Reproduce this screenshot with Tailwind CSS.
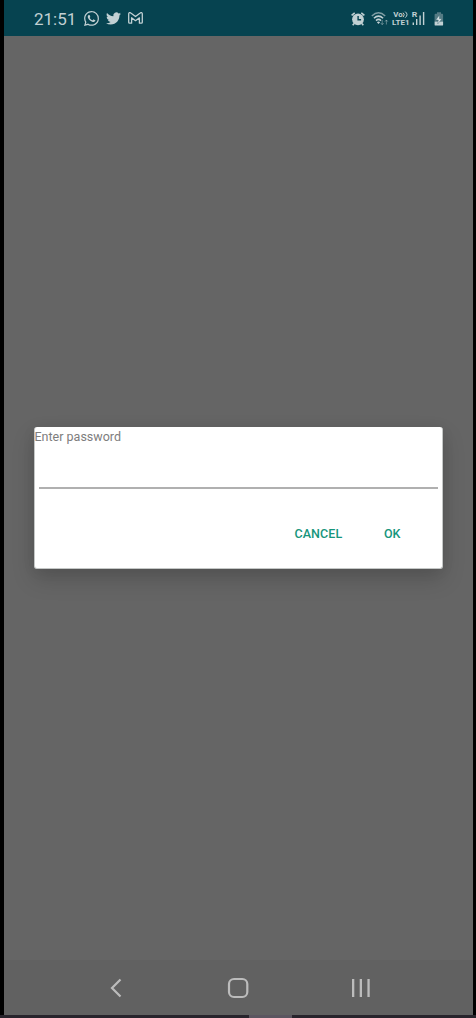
<!DOCTYPE html>
<html lang="en">
<head>
<meta charset="utf-8">
<title>Enter password</title>
<script src="https://cdn.jsdelivr.net/npm/@tailwindcss/browser@4"></script>
</head>
<body class="bg-black font-['Roboto',sans-serif] overflow-hidden">
<div class="w-[476px] h-[1018px] flex flex-col">
  <div class="ml-1 w-[469px] h-[1015px] flex flex-col bg-[#656565] overflow-hidden">
    <header class="h-9 shrink-0 bg-[#064350] flex items-center pl-[30px] pr-[29px] text-[#c1d0d3]">
      <span class="w-[42px] text-[17px] leading-5 mt-px whitespace-nowrap">21:51</span>
      <svg class="ml-2 mt-px w-[15px] h-[15px]" viewBox="0 0 24 24" fill="currentColor"><path d="M17.472 14.382c-.297-.149-1.758-.867-2.03-.967-.273-.099-.471-.148-.67.15-.197.297-.767.966-.94 1.164-.173.199-.347.223-.644.075-.297-.15-1.255-.463-2.39-1.475-.883-.788-1.48-1.761-1.653-2.059-.173-.297-.018-.458.13-.606.134-.133.298-.347.446-.52.149-.174.198-.298.298-.497.099-.198.05-.371-.025-.52-.075-.149-.669-1.612-.916-2.207-.242-.579-.487-.5-.669-.51-.173-.008-.371-.01-.57-.01-.198 0-.52.074-.792.372-.272.297-1.04 1.016-1.04 2.479 0 1.462 1.065 2.875 1.213 3.074.149.198 2.096 3.2 5.077 4.487.709.306 1.262.489 1.694.625.712.227 1.36.195 1.871.118.571-.085 1.758-.719 2.006-1.413.248-.694.248-1.289.173-1.413-.074-.124-.272-.198-.57-.347m-5.421 7.403h-.004a9.87 9.87 0 01-5.031-1.378l-.361-.214-3.741.982.998-3.648-.235-.374a9.86 9.86 0 01-1.51-5.26c.001-5.45 4.436-9.884 9.888-9.884 2.64 0 5.122 1.03 6.988 2.898a9.825 9.825 0 012.893 6.994c-.003 5.45-4.437 9.884-9.885 9.884m8.413-18.297A11.815 11.815 0 0012.05 0C5.495 0 .16 5.335.157 11.892c0 2.096.547 4.142 1.588 5.945L.057 24l6.305-1.654a11.882 11.882 0 005.683 1.448h.005c6.554 0 11.89-5.335 11.893-11.893a11.821 11.821 0 00-3.48-8.413Z"/></svg>
      <svg class="ml-[7px] w-[15px] h-[15px]" viewBox="0 0 24 24" fill="currentColor"><path d="M23.953 4.57a10 10 0 01-2.825.775 4.958 4.958 0 002.163-2.723c-.951.555-2.005.959-3.127 1.184a4.92 4.92 0 00-8.384 4.482C7.69 8.095 4.067 6.13 1.64 3.162a4.822 4.822 0 00-.666 2.475c0 1.71.87 3.213 2.188 4.096a4.904 4.904 0 01-2.228-.616v.06a4.923 4.923 0 003.946 4.827 4.996 4.996 0 01-2.212.085 4.936 4.936 0 004.604 3.417 9.867 9.867 0 01-6.102 2.105c-.39 0-.779-.023-1.17-.067a13.995 13.995 0 007.557 2.209c9.053 0 13.998-7.496 13.998-13.985 0-.21 0-.42-.015-.63A9.935 9.935 0 0024 4.59z"/></svg>
      <svg class="ml-[7px] w-[15px] h-[12px]" viewBox="0 0 15 12" fill="none" stroke="currentColor" stroke-width="1.3" stroke-linejoin="round"><path d="M.7 10.3V1.8C.7.6 2 .3 2.8 1L7.5 4.6 12.2 1c.8-.7 2.1-.4 2.1.8v8.5c0 .6-.3.9-.9.9h-2V5.8L7.5 8.7 3.6 5.8v5.4h-2c-.6 0-.9-.3-.9-.9Z"/></svg>
      <span class="grow"></span>
      <svg class="mt-px w-[14px] h-[14px]" viewBox="0 0 14 14"><circle cx="7" cy="7.3" r="5.9" fill="currentColor"/><path d="M.6 3.3 3.7.8M13.4 3.3 10.3.8M3.1 11.4 1.7 13.2M10.9 11.4l1.4 1.8" stroke="currentColor" stroke-width="1.6"/><path d="M7.1 4v3.8h3" fill="none" stroke="#064350" stroke-width="1.4"/></svg>
      <svg class="ml-[6px] mt-px w-[18px] h-[15px]" viewBox="0 0 18 15" fill="none" stroke="currentColor"><path d="M.8 4.9Q7.5-1.5 14.2 4.9" stroke-width="1.4" opacity=".65"/><path d="M2.9 7.3Q7.5 2.9 12.1 7.3M5 9.6Q7.5 7.2 10 9.6" stroke-width="1.5"/><path d="m5.9 11.2 1.6 1.8 1.6-1.8q-1.6-1.2-3.2 0Z" fill="currentColor" stroke="none"/><path d="M11.2 9v4.5m-1.4-1.4 1.4 1.6 1.4-1.6M15.4 13.5V9m-1.4 1.6L15.4 9l1.4 1.6" stroke-width="1" opacity=".45"/></svg>
      <svg class="ml-[3px] w-[34px] h-4" viewBox="0 0 34 16" fill="currentColor" font-family="Roboto" font-weight="700"><text x="1.3" y="7.4" font-size="7.6" textLength="9.4" lengthAdjust="spacingAndGlyphs">Vo</text><path d="M11.1 2.7q2.3 1.9 0 4.4M13.2 1.6q3.6 3 0 6.1" fill="none" stroke="currentColor" stroke-width="1"/><text x="0" y="15" font-size="7.6" textLength="17.5" lengthAdjust="spacingAndGlyphs">LTE1</text><text x="19.7" y="7.4" font-size="8" textLength="5.5" lengthAdjust="spacingAndGlyphs">R</text><path d="M20.6 12.5H22V15h-1.4zM24 9h1.4v6H24zM27.4 5.5h1.4V15h-1.4zM30.9 2h1.4v13h-1.4z"/></svg>
      <svg class="ml-2 mt-px w-[10px] h-[14px]" viewBox="0 0 10 14"><path d="M3 .3h4v1.5h1.2q.9 0 .9.9V9.5H.6V2.7q0-.9.9-.9H3Z" fill="#547b84"/><path d="M.6 9.5h8.5v3.2q0 .9-.9.9H1.5q-.9 0-.9-.9Z" fill="currentColor"/><path d="M5.6 2.8 1.8 8h2.5L3.7 12 8 6.7H5.4Z" fill="#d7e1e3" stroke="#174f5b" stroke-width=".3"/></svg>
    </header>
    <main class="h-[924px] shrink-0 pt-[391px] px-[30px]">
      <section class="w-[409px] h-[142px] bg-white rounded-[3px] border-b border-x border-[#c4c7c6] shadow-[0_10px_22px_rgba(0,0,0,0.17),0_2px_14px_rgba(0,0,0,0.06)] flex flex-col">
        <label for="password" class="-ml-[0.5px] h-[18px] pt-px text-[12.5px] leading-[18px] text-[#7d7d7d] whitespace-nowrap">Enter password</label>
        <input id="password" type="password" class="mx-1 h-[44px] border-b-2 border-[#b0b0b0] outline-none">
        <div class="mt-[35px] ml-[259.5px] flex text-[12.5px] leading-[20px] font-medium text-[#16957b]">
          <button class="w-[49px] text-left tracking-[0.08px]">CANCEL</button>
          <button class="ml-[40.5px] text-left">OK</button>
        </div>
      </section>
    </main>
    <nav class="h-[55px] shrink-0 bg-[#616161] pl-[106px] pr-[103px] flex items-center text-[#bcbcbc]">
      <svg class="w-3 h-5" viewBox="0 0 12 20" fill="none" stroke="currentColor" stroke-width="2.2"><path d="M10.5 1.4 2 10l8.5 8.6"/></svg>
      <svg class="ml-[105px] w-[22px] h-[22px]" viewBox="0 0 22 22" fill="none" stroke="currentColor" stroke-width="2.2"><rect x="2" y="2" width="18.3" height="18" rx="5"/></svg>
      <svg class="ml-[103px] w-[18px] h-5" viewBox="0 0 18 20" fill="currentColor"><path d="M0 1h2.3v18H0zM7.7 1H10v18H7.7zM15.4 1h2.3v18h-2.3z"/></svg>
    </nav>
  </div>
  <div class="h-[3px] bg-[#28242c] pl-[249px]"><div class="w-[43px] h-[3px] bg-[#5b5660]"></div></div>
</div>
</body>
</html>
